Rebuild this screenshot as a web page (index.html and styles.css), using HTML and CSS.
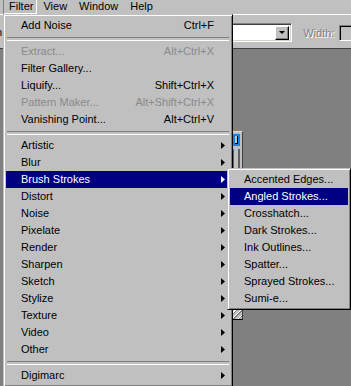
FILE: index.html
```html
<!DOCTYPE html>
<html lang="en">
<head>
  <meta charset="UTF-8" />
  <title>Filter menu</title>
  <link rel="stylesheet" href="styles.css">
</head>
<body>
  <div class="menubar">
    <span class="mb-item open">Filter</span>
    <span class="mb-item">View</span>
    <span class="mb-item">Window</span>
    <span class="mb-item">Help</span>
  </div>

  <div class="toolbar">
    <span class="tb-cut">n</span>
    <div class="combo">
      <span class="combo-btn"><i class="down"></i></span>
    </div>
    <span class="tb-label">Width:</span>
    <span class="tb-input"></span>
  </div>

  <div class="workspace">
    <!-- edge of a document window peeking out behind the menus -->
    <div class="docwin">
      <div class="dw-focus"></div>
      <div class="dw-bar"></div>
      <div class="dw-grip"></div>
    </div>
  </div>

  <div class="menu main-menu">
    <div class="item"><span class="label">Add Noise</span><span class="key">Ctrl+F</span><span class="arrow"></span></div>
    <div class="sep"></div>
    <div class="item disabled"><span class="label">Extract...</span><span class="key">Alt+Ctrl+X</span><span class="arrow"></span></div>
    <div class="item"><span class="label">Filter Gallery...</span><span class="key"></span><span class="arrow"></span></div>
    <div class="item"><span class="label">Liquify...</span><span class="key">Shift+Ctrl+X</span><span class="arrow"></span></div>
    <div class="item disabled"><span class="label">Pattern Maker...</span><span class="key">Alt+Shift+Ctrl+X</span><span class="arrow"></span></div>
    <div class="item"><span class="label">Vanishing Point...</span><span class="key">Alt+Ctrl+V</span><span class="arrow"></span></div>
    <div class="sep"></div>
    <div class="item has-sub"><span class="label">Artistic</span><span class="arrow"></span></div>
    <div class="item has-sub"><span class="label">Blur</span><span class="arrow"></span></div>
    <div class="item has-sub active"><span class="label">Brush Strokes</span><span class="arrow"></span></div>
    <div class="item has-sub"><span class="label">Distort</span><span class="arrow"></span></div>
    <div class="item has-sub"><span class="label">Noise</span><span class="arrow"></span></div>
    <div class="item has-sub"><span class="label">Pixelate</span><span class="arrow"></span></div>
    <div class="item has-sub"><span class="label">Render</span><span class="arrow"></span></div>
    <div class="item has-sub"><span class="label">Sharpen</span><span class="arrow"></span></div>
    <div class="item has-sub"><span class="label">Sketch</span><span class="arrow"></span></div>
    <div class="item has-sub"><span class="label">Stylize</span><span class="arrow"></span></div>
    <div class="item has-sub"><span class="label">Texture</span><span class="arrow"></span></div>
    <div class="item has-sub"><span class="label">Video</span><span class="arrow"></span></div>
    <div class="item has-sub"><span class="label">Other</span><span class="arrow"></span></div>
    <div class="sep"></div>
    <div class="item has-sub"><span class="label">Digimarc</span><span class="arrow"></span></div>
  </div>

  <div class="menu sub-menu">
    <div class="item"><span class="label">Accented Edges...</span></div>
    <div class="item active"><span class="label">Angled Strokes...</span></div>
    <div class="item"><span class="label">Crosshatch...</span></div>
    <div class="item"><span class="label">Dark Strokes...</span></div>
    <div class="item"><span class="label">Ink Outlines...</span></div>
    <div class="item"><span class="label">Spatter...</span></div>
    <div class="item"><span class="label">Sprayed Strokes...</span></div>
    <div class="item"><span class="label">Sumi-e...</span></div>
  </div>
</body>
</html>
```

FILE: styles.css
```css
    * {
      box-sizing: border-box;
      font-family: 'Liberation Sans', Arial, sans-serif;
    }

    body {
      margin: 0;
      width: 351px;
      height: 386px;
      overflow: hidden;
      position: relative;
      background: #808080;
      font-size: 11px;
      color: #000;
    }

    /* top menu bar */
    .menubar {
      height: 14px;
      padding-left: 3px;
      display: flex;
      background: #c0c0c0;
    }

    .mb-item {
      padding: 0 6px;
      height: 14px;
      line-height: 13px;
      white-space: nowrap;
    }

    .mb-item.open {
      padding-right: 4px;
      box-shadow: inset 1px 0 #808080, inset -1px -1px #fff;
    }

    /* options bar */
    .toolbar {
      height: 35px;
      padding-top: 2px;
      display: flex;
      align-items: center;
      background: #c0c0c0;
      border-top: 1px solid #fff;
      border-bottom: 1px solid #404040;
      white-space: nowrap;
    }

    .toolbar > * {
      flex-shrink: 0;
    }

    .tb-cut {
      margin-left: -4px;
      line-height: 13px;
    }

    .combo {
      margin-left: 169px;
      width: 121px;
      height: 19px;
      padding: 1px 2px;
      display: flex;
      justify-content: flex-end;
      align-items: center;
      background: #fff;
      border: 1px solid;
      border-color: #808080 #fff #fff #808080;
      box-shadow: inset 1px 1px #404040, inset -1px -1px #d4d0c8;
    }

    .combo-btn {
      width: 14px;
      height: 14px;
      display: flex;
      justify-content: center;
      align-items: center;
      background: #c0c0c0;
      border: 1px solid;
      border-color: #fff #000 #000 #fff;
      box-shadow: inset -1px -1px #808080;
    }

    .down {
      width: 0;
      height: 0;
      border-top: 3px solid #000;
      border-left: 3px solid transparent;
      border-right: 3px solid transparent;
    }

    .tb-label {
      margin-left: 11px;
      color: #808080;
      text-shadow: 1px 1px #fff;
    }

    .tb-input {
      margin-left: 5px;
      width: 30px;
      height: 16px;
      background: #c0c0c0;
      border: 1px solid;
      border-color: #808080 #fff #fff #808080;
      box-shadow: inset 1px 1px #000;
    }

    .workspace {
      height: 337px;
      position: relative;
      background: #808080;
    }

    .docwin {
      position: absolute;
      left: 233px;
      top: 82px;
      width: 10px;
      height: 189px;
      background: #c0c0c0;
      border-top: 1px solid #e0e0e0;
      border-right: 1px solid #404040;
      border-bottom: 1px solid #000;
    }

    .dw-focus {
      margin-top: 2px;
      width: 7px;
      height: 12px;
      border: 2px solid #1e7fd8;
      box-shadow: inset -1px -1px #000;
    }

    .dw-bar {
      margin-top: 3px;
      width: 7px;
      height: 24px;
      border-left: 1px solid #606060;
      border-right: 2px solid #606060;
    }

    .dw-grip {
      position: absolute;
      left: 0;
      bottom: 0;
      width: 9px;
      height: 10px;
      background: repeating-linear-gradient(135deg, #c0c0c0 0 2px, #fff 2px 3px, #808080 3px 4px);
    }

    /* drop-down menus */
    .menu {
      position: absolute;
      padding: 2px;
      background: #c0c0c0;
      border: 1px solid;
      border-color: #c0c0c0 #000 #000 #c0c0c0;
      box-shadow: inset 1px 1px #fff, inset -1px -1px #808080;
    }

    .main-menu {
      left: 3px;
      top: 14px;
      width: 230px;
    }

    .sub-menu {
      left: 227px;
      top: 168px;
      width: 124px;
    }

    .item {
      height: 17px;
      line-height: 17px;
      padding-left: 15px;
      display: flex;
      align-items: center;
      white-space: nowrap;
    }

    .sub-menu .item {
      padding-left: 14px;
    }

    .item .label {
      flex: 1;
    }

    .item .arrow {
      width: 16px;
      height: 17px;
      padding-left: 7px;
      flex-shrink: 0;
      display: flex;
      align-items: center;
    }

    .item.has-sub .arrow::before {
      content: '';
      width: 4px;
      height: 7px;
      background: #000;
      clip-path: polygon(0 0, 100% 50%, 0 100%);
    }

    .item.disabled {
      color: #8a8a8a;
    }

    .item.active {
      background: #000080;
      color: #fff;
    }

    .item.active.has-sub .arrow::before {
      background: #fff;
    }

    .sep {
      height: 9px;
      padding-top: 3px;
    }

    .sep::before {
      content: '';
      display: block;
      margin: 0 1px;
      height: 2px;
      border-top: 1px solid #808080;
      border-bottom: 1px solid #fff;
    }
```
